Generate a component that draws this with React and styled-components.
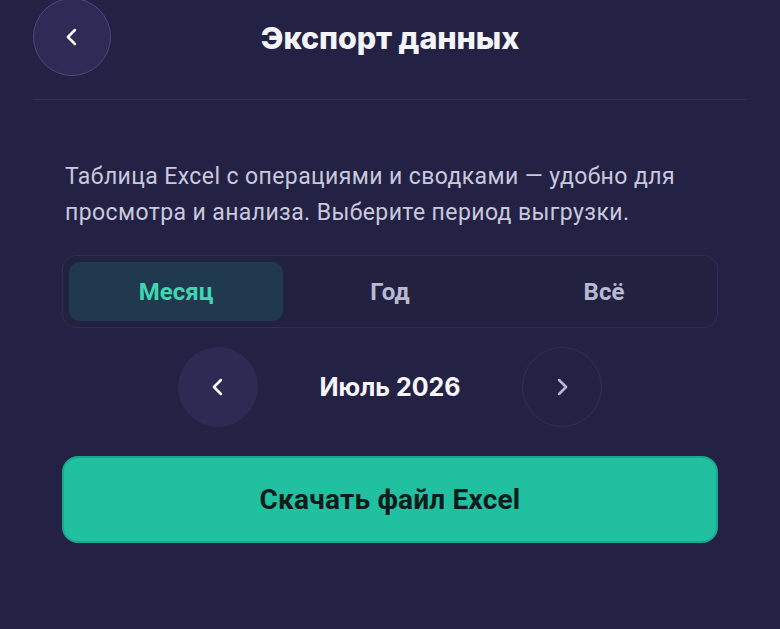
import React, { useState } from "react";
import styled, { createGlobalStyle } from "styled-components";

const GlobalStyle = createGlobalStyle`
  html, body {
    margin: 0;
    padding: 0;
    background: #242244;
  }
  body {
    font-family: Inter, "Noto Sans", sans-serif;
    color: #ffffff;
  }
`;

const periods = ["Месяц", "Год", "Всё"];

const Chevron = ({ dir = "left", color = "#fff", size = 26 }) => (
  <svg width={size} height={size} viewBox="0 0 24 24" fill="none">
    <path
      d={dir === "left" ? "M14.5 6l-6 6 6 6" : "M9.5 6l6 6-6 6"}
      stroke={color}
      strokeWidth="2.2"
      strokeLinecap="round"
      strokeLinejoin="round"
    />
  </svg>
);

export default function App() {
  const [period, setPeriod] = useState(0);

  return (
    <Page>
      <GlobalStyle />
      <Header>
        <BackButton aria-label="Назад">
          <Chevron dir="left" size={28} />
        </BackButton>
        <Title>Экспорт данных</Title>
        <HeaderSpacer />
      </Header>

      <Body>
        <Description>
          Таблица Excel с операциями и сводками — удобно для просмотра и
          анализа. Выберите период выгрузки.
        </Description>

        <Segmented>
          {periods.map((p, i) => (
            <Segment key={p} active={i === period} onClick={() => setPeriod(i)}>
              {p}
            </Segment>
          ))}
        </Segmented>

        <MonthRow>
          <RoundButton filled aria-label="Предыдущий">
            <Chevron dir="left" size={28} />
          </RoundButton>
          <MonthLabel>Июль 2026</MonthLabel>
          <RoundButton aria-label="Следующий">
            <Chevron dir="right" color="#b9b8d6" size={28} />
          </RoundButton>
        </MonthRow>

        <DownloadButton>Скачать файл Excel</DownloadButton>
      </Body>
    </Page>
  );
}

const Page = styled.div`
  width: 780px;
  min-height: 629px;
  box-sizing: border-box;
  background: #242244;
`;

const Header = styled.div`
  display: flex;
  align-items: center;
  justify-content: space-between;
  margin: 0 33px;
  height: 100px;
  box-sizing: border-box;
  padding-bottom: 24px;
  border-bottom: 1px solid #302e52;
`;

const BackButton = styled.button`
  width: 78px;
  height: 78px;
  margin-top: -1px;
  border-radius: 50%;
  background: #2e2b56;
  border: 1.5px solid #4d4887;
  display: flex;
  align-items: center;
  justify-content: center;
  padding: 0;
  cursor: pointer;
`;

const HeaderSpacer = styled.div`
  width: 78px;
`;

const Title = styled.h1`
  margin: 0;
  font-size: 30.5px;
  font-weight: 800;
  color: #f4f4fb;
  letter-spacing: -0.1px;
`;

const Body = styled.div`
  padding: 59px 62px 0;
  display: flex;
  flex-direction: column;
`;

const Description = styled.p`
  margin: 0 0 0 3px;
  font-family: Roboto, "Noto Sans", sans-serif;
  font-size: 23px;
  line-height: 36px;
  color: #c9c8de;
  letter-spacing: 0.4px;
`;

const Segmented = styled.div`
  margin-top: 24px;
  display: grid;
  grid-template-columns: repeat(3, 1fr);
  padding: 6px;
  height: 73px;
  box-sizing: border-box;
  border: 1px solid #2f2d52;
  border-radius: 14px;
  background: #232140;
`;

const Segment = styled.button`
  border: none;
  border-radius: 11px;
  background: ${(p) => (p.active ? "#20394f" : "transparent")};
  color: ${(p) => (p.active ? "#3fd6b1" : "#b8bad2")};
  font-family: Roboto, "Noto Sans", sans-serif;
  font-size: 24px;
  font-weight: 700;
  cursor: pointer;
`;

const MonthRow = styled.div`
  margin-top: 19px;
  display: flex;
  align-items: center;
  justify-content: center;
`;

const RoundButton = styled.button`
  width: 80px;
  height: 80px;
  border-radius: 50%;
  padding: 0;
  display: flex;
  align-items: center;
  justify-content: center;
  background: ${(p) => (p.filled ? "#2d2a53" : "transparent")};
  border: 1.5px solid ${(p) => (p.filled ? "#2d2a53" : "#302e55")};
  cursor: pointer;
`;

const MonthLabel = styled.div`
  width: 264px;
  text-align: center;
  font-size: 25px;
  font-weight: 700;
  color: #f6f6fc;
`;

const DownloadButton = styled.button`
  margin-top: 29px;
  height: 87px;
  border-radius: 16px;
  background: #20c0a0;
  border: 2px solid #1aa98c;
  color: #0d1b1a;
  font-family: Roboto, "Noto Sans", sans-serif;
  font-size: 28px;
  font-weight: 700;
  letter-spacing: 0.2px;
  cursor: pointer;
`;
